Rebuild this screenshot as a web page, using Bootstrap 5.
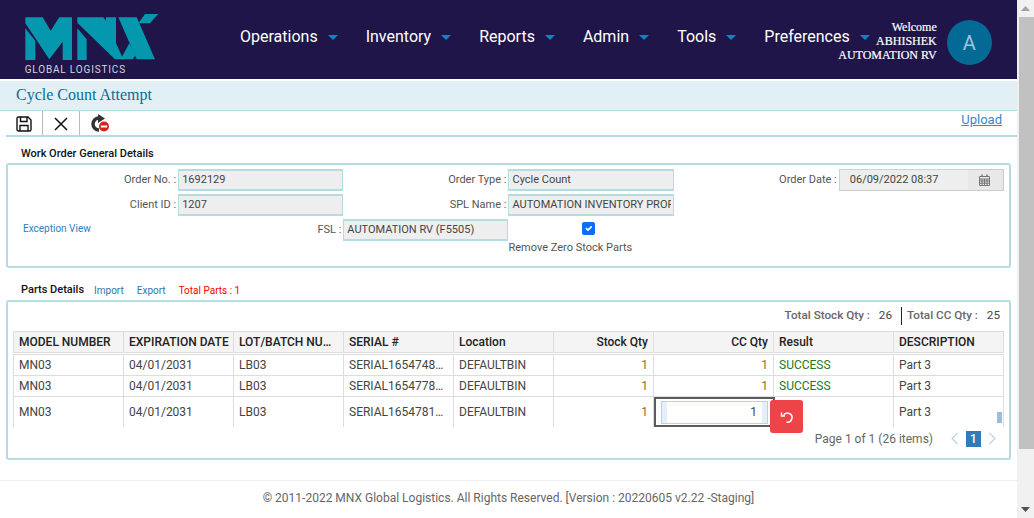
<!DOCTYPE html>
<html lang="en">
  <head>
    <meta charset="UTF-8" />
    <meta name="viewport" content="width=device-width, initial-scale=1.0" />
    <link rel="stylesheet" href="https://cdn.jsdelivr.net/npm/bootstrap@5.3.2/dist/css/bootstrap.min.css" />
    <title>Cycle Count Attempt</title>
    <style>
      html, body { height: 518px; overflow: hidden; }
      body { font-family: Roboto, sans-serif; font-size: 12px; color: #444; background: #fff; }
      .page-main { width: 1017px; height: 518px; }

      .fake-scroll { width: 17px; height: 518px; background: #f1f1f1; }
      .fake-thumb { width: 15px; height: 432px; margin: 0 0 0 2px; background: #c1c1c1; }
      .fake-arrow { height: 17px; }

      .top-bar { background: #1f1548; height: 79px; padding: 0; margin-bottom: 2px; flex-wrap: nowrap; justify-content: flex-start; }
      .logo-box { width: 240px; height: 79px; flex: none; }
      .top-menu { gap: 28px; }
      .top-menu .nav-link { color: #fff; font-size: 16px; padding: 0; line-height: 20px; margin-top: -5px; }
      .top-menu .dropdown-toggle::after { margin-left: 10px; vertical-align: 2px; border-top: 5px solid #0a87c0; border-left: 5px solid transparent; border-right: 5px solid transparent; border-bottom: 0; }
      .welcome-box { font-family: "Liberation Serif", serif; font-size: 12px; line-height: 14px; color: #fff; text-align: right; width: 100px; margin-left: -33px; margin-top: 2px; white-space: nowrap; -webkit-text-stroke: .2px #fff; flex: none; }
      .user-circle { width: 45px; height: 45px; background: #026a94; color: #9cc6e2; font-size: 20px; margin-left: 10px; margin-top: 6px; }

      .title-bar { background: #e1f0f4; height: 30px; border-bottom: 1px solid #b5dce0; font-family: "Liberation Serif", serif; font-size: 16px; color: #0f6a94; padding-left: 16px; line-height: 28px; }
      .tool-bar { height: 26px; margin-left: 6px; border-bottom: 2px solid #b5dce0; }
      .tool-btn { width: 37px; height: 24px; border-right: 1px solid #bbb; padding-top: 1px; }
      .tool-btn.last-one { border-right: 0; }
      .undo-icon { margin: -1px 0 0 3px; }
      .upload-link { color: #3c86c9; font-size: 13px; margin-right: 15px; margin-top: -1px; }

      .group-label { font-size: 11px; font-weight: 500; color: #111; padding-left: 21px; line-height: 13px; }
      .first-label { margin-top: 10px; }
      .group-box { margin: 0 6px; border: 2px solid #b5dce0; border-radius: 3px; }
      .info-box { height: 105px; margin-top: 3px; padding: 4px 5px 0; }
      .form-line { height: 25px; margin: 0; }
      .form-line > div { padding: 0; }
      .field-label { font-size: 11px; color: #555; text-align: right; padding-right: 2px !important; line-height: 22px; }
      .field-input.form-control { height: 22px; min-height: 0; padding: 0 2px 2px 3px; font-size: 11px; color: #444; background: #eee; border: 1px solid #b5dce0; border-width: 2px 1px; border-radius: 0; line-height: 16px; }
      .date-group .form-control { height: 22px; min-height: 0; padding: 0 10px 2px; font-size: 11px; color: #444; background: #eee; border: 1px solid #ccc; border-left-color: #b5dce0; border-top-color: #b5dce0; border-right: 0; border-radius: 0; }
      .date-group .input-group-text { height: 22px; width: 37px; padding: 0; justify-content: center; background: #e8e8e8; border: 1px solid #ccc; border-left: 0; border-radius: 0; }
      .exc-link { font-size: 10px; color: #2a7fc0; text-decoration: none; padding-left: 10px; line-height: 19px; }
      .zero-check { text-align: left; }
      .zero-check .form-check-input { width: 13px; height: 13px; margin: 3px 0 0 74px; display: block; border-radius: 2px; }
      .zero-label { font-size: 11px; color: #555; line-height: 13px; margin-top: 6px; white-space: nowrap; }

      .parts-head { margin-top: 15px; height: 17px; gap: 13px; }
      .parts-head .group-label { margin-right: -3px; }
      .parts-head a, .parts-head span.red-note { font-size: 10px; text-decoration: none; }
      .parts-head a { color: #2f77a8; }
      .parts-head span.red-note { color: #f00; }
      .parts-box { height: 160px; padding: 0 5px; position: relative; }
      .totals-line { height: 24px; margin-bottom: 5px; padding: 4px 4px 0 0; font-size: 11.7px; color: #444; gap: 9px; align-items: center; }
      .totals-line b { font-weight: 500; color: #666; }
      .totals-line .tot-sep { border-left: 1px solid #222; padding-left: 5px; }

      .parts-table { table-layout: fixed; width: 990px; font-size: 12px; border-collapse: collapse; color: #333; }
      .parts-table th, .parts-table td { border: 1px solid #ddd; padding: 0 5px; white-space: nowrap; overflow: hidden; }
      .parts-table thead th { background: #f4f4f4; font-weight: 500; color: #222; height: 22px; border-bottom: 3px double #ddd; }
      .parts-table thead th.tight-head { padding-right: 0; }
      .parts-table tbody td { height: 21.5px; color: #444; }
      .parts-table tbody tr.edit-row td { height: 30px; border-bottom: 0; }
      .qty-cell { text-align: right; color: #9a6a1c !important; }
      .result-ok { color: #1d7a1d !important; }
      .edit-cell { position: relative; overflow: visible !important; }
      .edit-frame { position: absolute; left: 0; top: 0; width: 121px; height: 30px; border: 2px solid #5c5c5c; padding: 2px 5px; background: #fff; }
      .edit-input { height: 23px; border: 1px solid #b5dfb0; background: linear-gradient(to right, #e6eefa 5px, #fff 5px, #fff calc(100% - 5px), #e6eefa calc(100% - 5px)); text-align: right; padding-right: 10px; line-height: 20px; font-size: 12px; color: #444; }
      .undo-btn { position: absolute; left: 116px; top: 3px; width: 33px; height: 33px; padding: 0; background: #ee4347; border: 0; border-radius: 3px; z-index: 3; }
      .mini-scroll { position: absolute; right: 7px; top: 110px; width: 5px; height: 11px; background: #9ebcdc; }

      .pager-line { height: 26px; padding-right: 7px; margin-top: -1px; font-size: 12px; color: #666; }
      .pager-line .pagination { margin: 0 0 0 17px; gap: 8px; align-items: center; }
      .pager-line .page-link { padding: 0; border: 0; background: transparent; font-size: 12px; color: #bcd3ea; line-height: 16px; }
      .pager-line .active .page-link { background: #337ab7; color: #fff; width: 15px; text-align: center; font-weight: 500; }

      .foot-note { margin-top: 20px; border-top: 1px solid #eee; text-align: center; font-size: 12px; color: #666; padding-top: 10px; line-height: 15px; }
    </style>
  </head>

  <body class="d-flex">
    <div class="page-main">
      <nav class="navbar top-bar d-flex align-items-center">
        <div class="logo-box">
          <svg width="240" height="79" viewBox="0 0 720 237">
            <g fill="#0497ae">
              <polygon points="76,85 106,122 106,180 76,180" />
              <polygon points="76,52 128,52 152,92 178,52 216,52 216,180 188,180 188,125 148,178 76,70" />
              <polygon points="232,85 260,118 260,180 232,180" />
              <polygon points="232,52 310,52 318,62 318,52 348,52 348,130 370,178 345,178 232,68" />
              <polygon points="355,52 410,52 465,178 410,178" />
              <polygon points="435,42 475,42 450,70 415,70" />
              <polygon points="388,130 407,165 398,178 362,178" />
            </g>
            <text x="74" y="220" fill="#d6d6de" font-family="Roboto, sans-serif" font-size="30" letter-spacing="2.500">GLOBAL LOGISTICS</text>
          </svg>
        </div>
        <ul class="navbar-nav flex-row top-menu">
          <li class="nav-item dropdown"><a class="nav-link dropdown-toggle" href="#">Operations</a></li>
          <li class="nav-item dropdown"><a class="nav-link dropdown-toggle" href="#">Inventory</a></li>
          <li class="nav-item dropdown"><a class="nav-link dropdown-toggle" href="#">Reports</a></li>
          <li class="nav-item dropdown"><a class="nav-link dropdown-toggle" href="#">Admin</a></li>
          <li class="nav-item dropdown"><a class="nav-link dropdown-toggle" href="#">Tools</a></li>
          <li class="nav-item dropdown"><a class="nav-link dropdown-toggle" href="#">Preferences</a></li>
        </ul>
        <div class="welcome-box">Welcome<br />ABHISHEK<br />AUTOMATION RV</div>
        <div class="user-circle rounded-circle d-flex align-items-center justify-content-center flex-shrink-0">A</div>
      </nav>

      <div class="title-bar">Cycle Count Attempt</div>
      <div class="tool-bar d-flex">
        <div class="tool-btn d-flex align-items-center justify-content-center">
          <svg width="16" height="16" viewBox="0 0 16 16" fill="none" stroke="#111" stroke-width="1.400">
            <path d="M2.500 1h9.500l3 3v9.500a1.500 1.500 0 0 1-1.500 1.500h-11A1.500 1.500 0 0 1 1 13.500v-11A1.500 1.500 0 0 1 2.500 1z" />
            <path d="M4.500 1v4.500h6.500V1M4 15V9.500h8V15" />
          </svg>
        </div>
        <div class="tool-btn d-flex align-items-center justify-content-center">
          <svg width="16" height="16" viewBox="0 0 16 16" fill="none" stroke="#111" stroke-width="1.500"><path d="M2 2l12 12M14 2L2 14" /></svg>
        </div>
        <div class="tool-btn last-one d-flex align-items-center justify-content-center">
          <svg class="undo-icon" width="20" height="20" viewBox="0 0 20 20">
            <path d="M9 5a6 6 0 1 0 0 12" fill="none" stroke="#333" stroke-width="3.500" />
            <path d="M8 1l7 4.500L8 10z" fill="#333" />
            <circle cx="14" cy="13.500" r="5" fill="#d8201c" />
            <rect x="10.800" y="12.500" width="6.400" height="2" fill="#fff" />
          </svg>
        </div>
        <a class="upload-link ms-auto" href="#">Upload</a>
      </div>

      <div class="group-label first-label">Work Order General Details</div>
      <div class="group-box info-box">
        <div class="row form-line">
          <div class="col-2 field-label">Order No. :</div>
          <div class="col-2"><input class="form-control field-input" value="1692129" disabled /></div>
          <div class="col-2 field-label">Order Type :</div>
          <div class="col-2"><input class="form-control field-input" value="Cycle Count" disabled /></div>
          <div class="col-2 field-label">Order Date :</div>
          <div class="col-2">
            <div class="input-group date-group flex-nowrap">
              <input class="form-control" value="06/09/2022 08:37" disabled />
              <span class="input-group-text">
                <svg width="11" height="12" viewBox="0 0 11 12" fill="none" stroke="#777"><path d="M.5 2.500h10v9H.5zM.5 5h10M3 5v6.500M5.500 5v6.500M8 5v6.500M.5 7h10M.5 9.200h10" /><path d="M3 .5v2M8 .5v2" stroke-width="1.500" /></svg>
              </span>
            </div>
          </div>
        </div>
        <div class="row form-line">
          <div class="col-2 field-label">Client ID :</div>
          <div class="col-2"><input class="form-control field-input" value="1207" disabled /></div>
          <div class="col-2 field-label">SPL Name :</div>
          <div class="col-2"><input class="form-control field-input" value="AUTOMATION INVENTORY PROFILE" disabled /></div>
        </div>
        <div class="row form-line">
          <div class="col-2"><a class="exc-link" href="#">Exception View</a></div>
          <div class="col-2 field-label">FSL :</div>
          <div class="col-2"><input class="form-control field-input" value="AUTOMATION RV (F5505)" disabled /></div>
          <div class="col-2 zero-check">
            <input class="form-check-input" type="checkbox" checked />
            <div class="zero-label">Remove Zero Stock Parts</div>
          </div>
        </div>
      </div>

      <div class="parts-head d-flex align-items-start">
        <div class="group-label">Parts Details</div>
        <a href="#">Import</a>
        <a href="#">Export</a>
        <span class="red-note">Total Parts : 1</span>
      </div>
      <div class="group-box parts-box">
        <div class="totals-line d-flex justify-content-end">
          <span><b>Total Stock Qty :</b></span><span>26</span>
          <span class="tot-sep"><b>Total CC Qty :</b></span><span>25</span>
        </div>
        <table class="parts-table">
          <colgroup>
            <col style="width: 110px" /><col style="width: 110px" /><col style="width: 110px" /><col style="width: 110px" /><col style="width: 100px" /><col style="width: 100px" /><col style="width: 120px" /><col style="width: 120px" /><col style="width: 110px" />
          </colgroup>
          <thead>
            <tr>
              <th>MODEL NUMBER</th>
              <th class="tight-head">EXPIRATION DATE</th>
              <th>LOT/BATCH NU…</th>
              <th>SERIAL #</th>
              <th>Location</th>
              <th class="text-end">Stock Qty</th>
              <th class="text-end">CC Qty</th>
              <th>Result</th>
              <th>DESCRIPTION</th>
            </tr>
          </thead>
          <tbody>
            <tr>
              <td>MN03</td><td>04/01/2031</td><td>LB03</td><td>SERIAL1654748…</td><td>DEFAULTBIN</td>
              <td class="qty-cell">1</td><td class="qty-cell">1</td><td class="result-ok">SUCCESS</td><td>Part 3</td>
            </tr>
            <tr>
              <td>MN03</td><td>04/01/2031</td><td>LB03</td><td>SERIAL1654778…</td><td>DEFAULTBIN</td>
              <td class="qty-cell">1</td><td class="qty-cell">1</td><td class="result-ok">SUCCESS</td><td>Part 3</td>
            </tr>
            <tr class="edit-row">
              <td>MN03</td><td>04/01/2031</td><td>LB03</td><td>SERIAL1654781…</td><td>DEFAULTBIN</td>
              <td class="qty-cell">1</td>
              <td class="edit-cell">
                <div class="edit-frame"><div class="edit-input">1</div></div>
                <button class="undo-btn d-flex align-items-center justify-content-center" type="button">
                  <svg width="14" height="14" viewBox="0 0 14 14" fill="none" stroke="#fff" stroke-width="1.500">
                    <path d="M3.500 5.500A4.500 4.500 0 1 1 6.500 12" />
                    <path d="M1.500 2.500v3.500h3.500" stroke-width="1.400" />
                  </svg>
                </button>
              </td>
              <td></td><td>Part 3</td>
            </tr>
          </tbody>
        </table>
        <div class="mini-scroll"></div>
        <div class="pager-line d-flex justify-content-end align-items-center">
          <span>Page 1 of 1 (26 items)</span>
          <ul class="pagination">
            <li class="page-item"><a class="page-link d-block" href="#">
              <svg class="d-block" width="9" height="13" viewBox="0 0 9 13" fill="none" stroke="#bcd3ea" stroke-width="1.200"><path d="M7.500 1L2 6.500l5.500 5.500" /></svg>
            </a></li>
            <li class="page-item active"><a class="page-link d-block" href="#">1</a></li>
            <li class="page-item"><a class="page-link d-block" href="#">
              <svg class="d-block" width="9" height="13" viewBox="0 0 9 13" fill="none" stroke="#bcd3ea" stroke-width="1.200"><path d="M1.500 1L7 6.500l-5.500 5.500" /></svg>
            </a></li>
          </ul>
        </div>
      </div>

      <div class="foot-note">&copy; 2011-2022 MNX Global Logistics. All Rights Reserved. [Version : 20220605 v2.22 -Staging]</div>
    </div>

    <div class="fake-scroll d-flex flex-column">
      <div class="fake-arrow d-flex align-items-center justify-content-center"><svg width="9" height="5" viewBox="0 0 9 5"><path d="M4.500 0L9 5H0z" fill="#a3a3a3" /></svg></div>
      <div class="fake-thumb"></div>
      <div class="fake-arrow d-flex align-items-center justify-content-center mt-auto"><svg width="9" height="5" viewBox="0 0 9 5"><path d="M0 0h9L4.500 5z" fill="#505050" /></svg></div>
    </div>

    <script src="https://cdn.jsdelivr.net/npm/bootstrap@5.3.2/dist/js/bootstrap.bundle.min.js"></script>
  </body>
</html>
